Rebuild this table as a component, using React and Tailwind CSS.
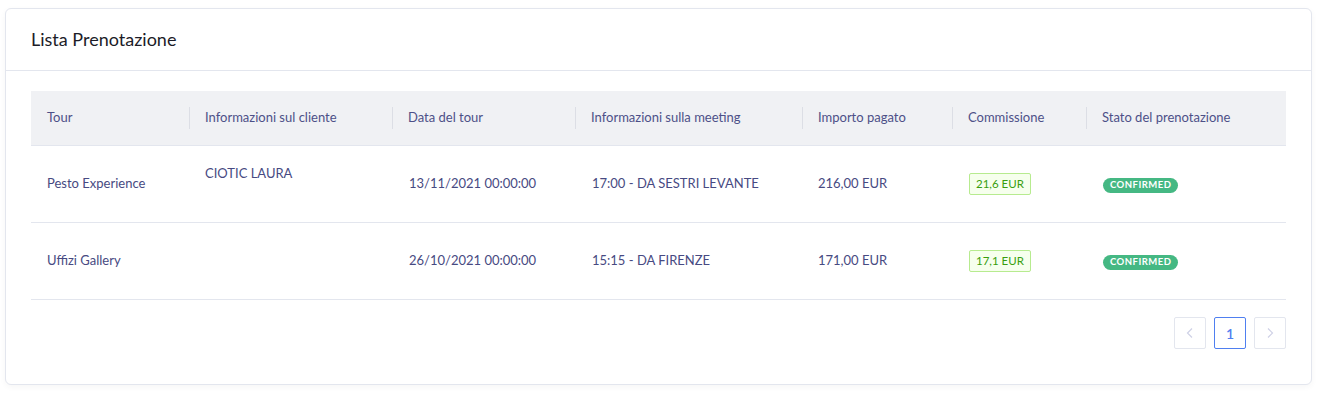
import React from "react";

const cols = [
  { label: "Tour", w: "w-[158px]" },
  { label: "Informazioni sul cliente", w: "w-[203px]" },
  { label: "Data del tour", w: "w-[183px]" },
  { label: "Informazioni sulla meeting", w: "w-[227px]" },
  { label: "Importo pagato", w: "w-[150px]" },
  { label: "Commissione", w: "w-[134px]" },
  { label: "Stato del prenotazione", w: "w-[200px]" },
];

const rows = [
  {
    tour: "Pesto Experience",
    client: "CIOTIC LAURA",
    date: "13/11/2021 00:00:00",
    meeting: "17:00 - DA SESTRI LEVANTE",
    amount: "216,00 EUR",
    comm: "21,6 EUR",
  },
  {
    tour: "Uffizi Gallery",
    client: "",
    date: "26/10/2021 00:00:00",
    meeting: "15:15 - DA FIRENZE",
    amount: "171,00 EUR",
    comm: "17,1 EUR",
  },
];

export default function App() {
  return (
    <div
      className="bg-white w-[1322px] h-[397px] pt-2 pl-[5px]"
      style={{ fontFamily: "Lato, 'Noto Sans', sans-serif" }}
    >
      <div className="w-[1307px] h-[377px] border border-[#e3e6ee] rounded-[6px] bg-white shadow-[0_2px_6px_rgba(0,0,0,0.04)] flex flex-col">
        <div className="h-[62px] flex items-center pl-[25px] border-b border-[#e3e6ee]">
          <span className="text-[18px] text-[#1c1c28]">Lista Prenotazione</span>
        </div>
        <div className="pt-5 pl-[25px] pr-[25px]">
          <div className="flex h-[55px] bg-[#f0f1f4] border-b border-[#e3e6ee] items-center text-[13px] text-[#4d5088]">
            {cols.map((c, i) => (
              <div key={i} className={`${c.w} flex items-center h-full`}>
                {i > 0 && <div className="w-px h-[22px] bg-[#dcdee5]" />}
                <span className={i > 0 ? "pl-[15px]" : "pl-4"}>{c.label}</span>
              </div>
            ))}
          </div>
          {rows.map((r, ri) => (
            <div
              key={ri}
              className="flex h-[77px] items-center border-b border-[#e3e6ee] text-[13px] text-[#474a82]"
            >
              <div className="w-[158px] pl-4">{r.tour}</div>
              <div className="w-[203px] pl-4 flex flex-col">
                {r.client ? (
                  <span className="leading-[22px] mb-[22px]">{r.client}</span>
                ) : null}
              </div>
              <div className="w-[183px] pl-[17px]">{r.date}</div>
              <div className="w-[227px] pl-[17px]">{r.meeting}</div>
              <div className="w-[150px] pl-4">{r.amount}</div>
              <div className="w-[134px] pl-[17px]">
                <span className="inline-flex items-center h-[22px] px-[6px] border border-[#b7eb8f] bg-[#f6ffed] text-[#389e0d] text-[11.5px] rounded-[2px]">
                  {r.comm}
                </span>
              </div>
              <div className="w-[200px] pl-[17px]">
                <span className="inline-flex items-center h-[15px] px-[7px] rounded-full bg-[#45b883] text-white text-[9.5px] font-bold tracking-[0.05em]">
                  CONFIRMED
                </span>
              </div>
            </div>
          ))}
          <div className="flex justify-end gap-2 pt-[17px]">
            <div className="w-8 h-8 border border-[#e3e6ee] rounded-[2px] flex items-center justify-center">
              <svg width="10" height="12" viewBox="0 0 10 12" fill="none" stroke="#cfd1e6" strokeWidth="1.2">
                <path d="M7 1.5 L2.5 6 L7 10.5" />
              </svg>
            </div>
            <div className="w-8 h-8 border border-[#4f7ff0] rounded-[2px] flex items-center justify-center text-[#4f7ff0] text-[14px] font-semibold">
              1
            </div>
            <div className="w-8 h-8 border border-[#e3e6ee] rounded-[2px] flex items-center justify-center">
              <svg width="10" height="12" viewBox="0 0 10 12" fill="none" stroke="#cfd1e6" strokeWidth="1.2">
                <path d="M3 1.5 L7.5 6 L3 10.5" />
              </svg>
            </div>
          </div>
        </div>
      </div>
    </div>
  );
}
